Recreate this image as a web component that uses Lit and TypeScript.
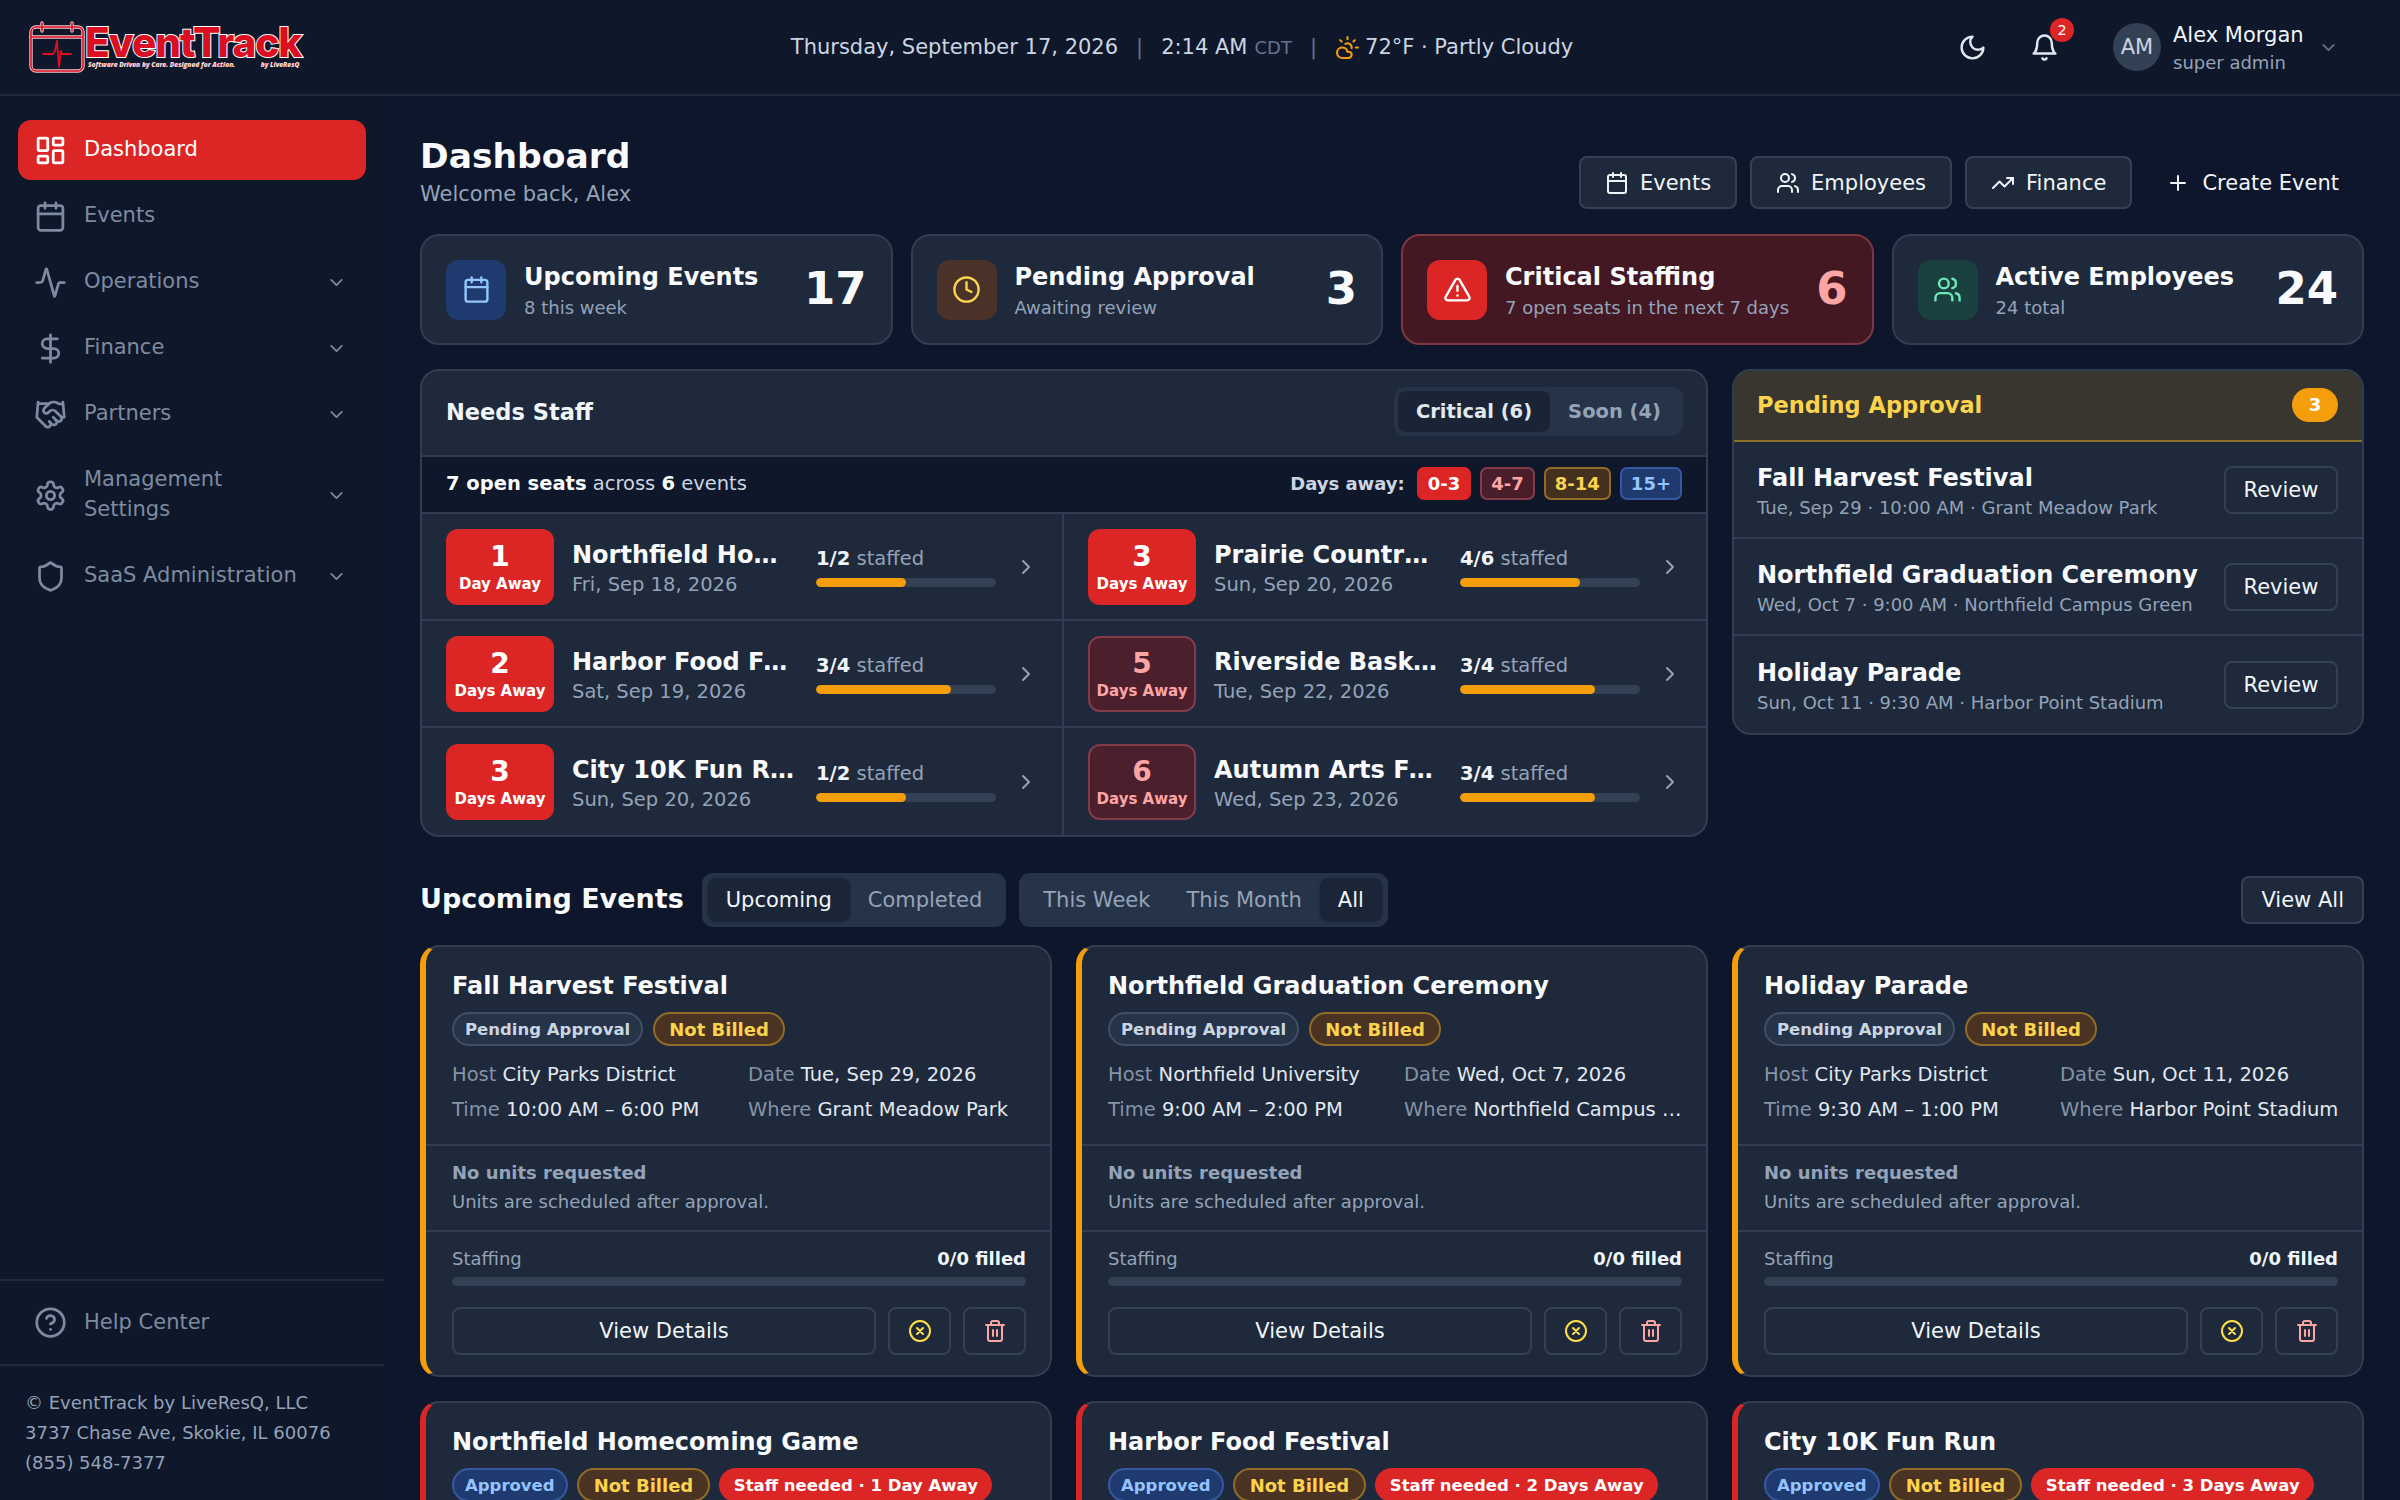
import { LitElement, html, css, svg } from "lit";
import { customElement } from "lit/decorators.js";

const I: Record<string, any> = {
  dash: svg`<rect x="3" y="3" width="7" height="9" rx="1"/><rect x="14" y="3" width="7" height="5" rx="1"/><rect x="14" y="12" width="7" height="9" rx="1"/><rect x="3" y="16" width="7" height="5" rx="1"/>`,
  cal: svg`<path d="M8 2v4M16 2v4"/><rect x="3" y="4" width="18" height="18" rx="2"/><path d="M3 10h18"/>`,
  activity: svg`<path d="M22 12h-2.48a2 2 0 0 0-1.93 1.46l-2.35 8.36a.25.25 0 0 1-.48 0L9.24 2.18a.25.25 0 0 0-.48 0l-2.35 8.36A2 2 0 0 1 4.49 12H2"/>`,
  dollar: svg`<path d="M12 2v20"/><path d="M17 5H9.5a3.5 3.5 0 0 0 0 7h5a3.5 3.5 0 0 1 0 7H6"/>`,
  hand: svg`<path d="m11 17 2 2a1 1 0 1 0 3-3"/><path d="m14 14 2.5 2.5a1 1 0 1 0 3-3l-3.88-3.88a3 3 0 0 0-4.24 0l-.88.88a1 1 0 1 1-3-3l2.81-2.81a5.79 5.79 0 0 1 7.06-.87l.47.28a2 2 0 0 0 1.42.25L21 4"/><path d="m21 3 1 11h-2"/><path d="M3 3 2 14l6.5 6.5a1 1 0 1 0 3-3"/><path d="M3 4h8"/>`,
  gear: svg`<path d="M12.22 2h-.44a2 2 0 0 0-2 2v.18a2 2 0 0 1-1 1.73l-.43.25a2 2 0 0 1-2 0l-.15-.08a2 2 0 0 0-2.73.73l-.22.38a2 2 0 0 0 .73 2.73l.15.1a2 2 0 0 1 1 1.72v.51a2 2 0 0 1-1 1.74l-.15.09a2 2 0 0 0-.73 2.73l.22.38a2 2 0 0 0 2.73.73l.15-.08a2 2 0 0 1 2 0l.43.25a2 2 0 0 1 1 1.73V20a2 2 0 0 0 2 2h.44a2 2 0 0 0 2-2v-.18a2 2 0 0 1 1-1.73l.43-.25a2 2 0 0 1 2 0l.15.08a2 2 0 0 0 2.73-.73l.22-.39a2 2 0 0 0-.73-2.73l-.15-.08a2 2 0 0 1-1-1.74v-.5a2 2 0 0 1 1-1.74l.15-.09a2 2 0 0 0 .73-2.73l-.22-.38a2 2 0 0 0-2.73-.73l-.15.08a2 2 0 0 1-2 0l-.43-.25a2 2 0 0 1-1-1.73V4a2 2 0 0 0-2-2z"/><circle cx="12" cy="12" r="3"/>`,
  shield: svg`<path d="M20 13c0 5-3.5 7.5-7.66 8.95a1 1 0 0 1-.67-.01C7.5 20.5 4 18 4 13V6a1 1 0 0 1 1-1c2 0 4.5-1.2 6.24-2.72a1.17 1.17 0 0 1 1.52 0C14.51 3.81 17 5 19 5a1 1 0 0 1 1 1z"/>`,
  down: svg`<path d="m6 9 6 6 6-6"/>`,
  right: svg`<path d="m9 18 6-6-6-6"/>`,
  moon: svg`<path d="M12 3a6 6 0 0 0 9 9 9 9 0 1 1-9-9Z"/>`,
  bell: svg`<path d="M6 8a6 6 0 0 1 12 0c0 7 3 9 3 9H3s3-2 3-9"/><path d="M10.3 21a1.94 1.94 0 0 0 3.4 0"/>`,
  clock: svg`<circle cx="12" cy="12" r="10"/><path d="M12 6v6l4 2"/>`,
  alert: svg`<path d="m21.73 18-8-14a2 2 0 0 0-3.48 0l-8 14A2 2 0 0 0 4 21h16a2 2 0 0 0 1.73-3"/><path d="M12 9v4"/><path d="M12 17h.01"/>`,
  users: svg`<path d="M16 21v-2a4 4 0 0 0-4-4H6a4 4 0 0 0-4 4v2"/><circle cx="9" cy="7" r="4"/><path d="M22 21v-2a4 4 0 0 0-3-3.87"/><path d="M16 3.13a4 4 0 0 1 0 7.75"/>`,
  trend: svg`<path d="M22 7l-8.5 8.5-5-5L2 17"/><path d="M16 7h6v6"/>`,
  plus: svg`<path d="M5 12h14M12 5v14"/>`,
  cx: svg`<circle cx="12" cy="12" r="10"/><path d="m15 9-6 6M9 9l6 6"/>`,
  trash: svg`<path d="M3 6h18"/><path d="M19 6v14c0 1-1 2-2 2H7c-1 0-2-1-2-2V6"/><path d="M8 6V4c0-1 1-2 2-2h4c1 0 2 1 2 2v2"/><path d="M10 11v6M14 11v6"/>`,
  help: svg`<circle cx="12" cy="12" r="10"/><path d="M9.09 9a3 3 0 0 1 5.83 1c0 2-3 3-3 3"/><path d="M12 17h.01"/>`,
  sun: svg`<path d="M12 2v2M4.93 4.93l1.41 1.41M20 12h2M19.07 4.93l-1.41 1.41"/><path d="M15.947 12.65a4 4 0 0 0-5.925-4.128"/><path d="M13 22H7a5 5 0 1 1 4.9-6H13a3 3 0 0 1 0 6Z"/>`,
};
const ic = (n: string, cls = "") => html`<svg class="ic ${cls}" viewBox="0 0 24 24" fill="none" stroke="currentColor" stroke-width="2" stroke-linecap="round" stroke-linejoin="round">${I[n]}</svg>`;

const nav = [
  ["dash", "Dashboard", false, true],
  ["cal", "Events", false, false],
  ["activity", "Operations", true, false],
  ["dollar", "Finance", true, false],
  ["hand", "Partners", true, false],
  ["gear", "Management Settings", true, false],
  ["shield", "SaaS Administration", true, false],
] as const;

const stats = [
  ["cal", "blue", "Upcoming Events", "8 this week", "17", false],
  ["clock", "amber", "Pending Approval", "Awaiting review", "3", false],
  ["alert", "red", "Critical Staffing", "7 open seats in the next 7 days", "6", true],
  ["users", "green", "Active Employees", "24 total", "24", false],
] as const;

const staff = [
  [1, "Day Away", "Northfield Homecoming Game", "Fri, Sep 18, 2026", 1, 2, true],
  [3, "Days Away", "Prairie Country Fair", "Sun, Sep 20, 2026", 4, 6, true],
  [2, "Days Away", "Harbor Food Festival", "Sat, Sep 19, 2026", 3, 4, true],
  [5, "Days Away", "Riverside Basketball Classic", "Tue, Sep 22, 2026", 3, 4, false],
  [3, "Days Away", "City 10K Fun Run", "Sun, Sep 20, 2026", 1, 2, true],
  [6, "Days Away", "Autumn Arts Festival", "Wed, Sep 23, 2026", 3, 4, false],
] as const;

const pending = [
  ["Fall Harvest Festival", "Tue, Sep 29 · 10:00 AM · Grant Meadow Park"],
  ["Northfield Graduation Ceremony", "Wed, Oct 7 · 9:00 AM · Northfield Campus Green"],
  ["Holiday Parade", "Sun, Oct 11 · 9:30 AM · Harbor Point Stadium"],
];

const events = [
  { t: "Fall Harvest Festival", host: "City Parks District", date: "Tue, Sep 29, 2026", time: "10:00 AM – 6:00 PM", where: "Grant Meadow Park" },
  { t: "Northfield Graduation Ceremony", host: "Northfield University", date: "Wed, Oct 7, 2026", time: "9:00 AM – 2:00 PM", where: "Northfield Campus Green" },
  { t: "Holiday Parade", host: "City Parks District", date: "Sun, Oct 11, 2026", time: "9:30 AM – 1:00 PM", where: "Harbor Point Stadium" },
];
const approved = [
  ["Northfield Homecoming Game", "Staff needed · 1 Day Away"],
  ["Harbor Food Festival", "Staff needed · 2 Days Away"],
  ["City 10K Fun Run", "Staff needed · 3 Days Away"],
];

@customElement("app-root")
export class AppRoot extends LitElement {
  static styles = css`
    :host { display: block; height: 100vh; overflow: hidden; background: #0d162a; color: #f1f5f9; font-family: "DejaVu Sans", sans-serif; font-size: 21px; }
    * { box-sizing: border-box; }
    .ic { display: block; flex: none; width: 1em; height: 1em; }
    header { display: grid; grid-template-columns: 384px 1fr 420px; align-items: center; height: 96px; background: #0f172a; border-bottom: 2px solid #1e293b; }
    .logo { display: flex; padding-left: 29px; align-items: flex-start; }
    .logo svg { width: 56px; height: 52px; flex: none; }
    .brand { display: flex; flex-direction: column; margin-top: 4px; }
    .brand b { font-family: Inter, sans-serif; font-weight: 800; font-size: 40.5px; line-height: 36px; letter-spacing: -1px; color: #dc0f22; -webkit-text-stroke: 2px #fff; paint-order: stroke fill; }
    .brand small { display: flex; justify-content: space-between; font-family: "Open Sans", sans-serif; font-style: italic; font-weight: 800; font-size: 6.6px; line-height: 8px; color: #fff; padding: 0 2px 0 3px; margin-top: 0; -webkit-text-stroke: .2px #dc0f22; }
    .mid { display: flex; justify-content: center; align-items: center; font-size: 21px; color: #cbd5e1; white-space: pre; }
    .mid i { font-style: normal; color: #64748b; margin: 0 18px; }
    .mid em { font-style: normal; font-size: 18px; color: #64748b; margin-left: 7px; }
    .mid .sun { color: #f59e0b; font-size: 25px; margin-right: 5px; }
    .right { display: flex; align-items: center; height: 100%; }
    .r-ic { position: relative; color: #e2e8f0; font-size: 29px; flex: none; }
    .moon { margin-left: -22px; }
    .bell { margin-left: 43px; }
    .badge { position: absolute; right: -15px; top: -15px; width: 24px; height: 24px; border-radius: 50%; background: #dc2626; color: #fff; font-size: 14.4px; line-height: 24px; text-align: center; }
    .avatar { width: 48px; height: 48px; border-radius: 50%; background: #334155; color: #cbd5e1; display: flex; align-items: center; justify-content: center; font-size: 21px; margin-left: 54px; flex: none; }
    .who { margin-left: 12px; padding-top: 1px; display: flex; flex-direction: column; }
    .who b { font-weight: 400; font-size: 21px; line-height: 30px; color: #f1f5f9; }
    .who span { font-size: 18px; line-height: 26px; color: #94a3b8; }
    .r-ch { color: #64748b; font-size: 21px; margin-left: 14px; }

    .body { display: flex; height: 1404px; }
    aside { width: 384px; flex: none; background: #0f172a; display: flex; flex-direction: column; color: #94a3b8; }
    .nav { flex: 1; display: flex; flex-direction: column; gap: 6px; padding: 24px 18px 0; }
    .ni { display: flex; align-items: center; min-height: 60px; padding: 0 19px 0 16px; border-radius: 13px; color: #7d8ba1; line-height: 30px; }
    .ni.on { background: #dc2626; color: #fff; }
    .ni .ic.main { font-size: 33px; margin-right: 17px; }
    .ni span { flex: 1; padding-bottom: 2px; }
    .ni .ch { font-size: 21px; }
    .ni.two { min-height: 90px; }
    .ni.two span { padding-right: 50px; }
    .help { border-top: 2px solid #1e293b; border-bottom: 2px solid #1e293b; height: 87px; padding: 0 34px; display: flex; align-items: center; gap: 17px; color: #7d8ba1; }
    .help .ic { font-size: 33px; }
    .help span { padding-bottom: 2px; }
    .foot { padding: 22px 25px 21px; font-size: 18px; line-height: 30px; color: #94a3b8; height: 134px; flex: none; }

    main { flex: 1; min-width: 0; padding: 40px 36px 0; display: flex; flex-direction: column; }
    .top { display: flex; justify-content: space-between; align-items: flex-end; height: 73px; margin-bottom: 25px; }
    h1 { margin: 0 0 3px; font-size: 34.5px; font-weight: 700; line-height: 40px; color: #f8fafc; }
    .welcome { font-size: 21px; line-height: 30px; color: #94a3b8; }
    .acts { display: flex; gap: 13px; }
    .btn { display: flex; align-items: center; gap: 11px; height: 53px; padding: 0 24px; background: #1e293b; border: 2px solid #334155; border-radius: 8px; color: #f1f5f9; font-size: 21px; }
    .btn .ic { font-size: 24px; }
    .btn.plain { background: none; border-color: transparent; padding: 0 23px 0 19px; gap: 12px; }
    .stats { display: grid; grid-template-columns: repeat(4, minmax(0, 1fr)); gap: 18px; }
    .stat { height: 111px; display: flex; align-items: center; background: #1e293b; border: 2px solid #303d52; border-radius: 19px; padding: 0 24px; }
    .stat.crit { background: #431823; border-color: #7f3742; }
    .si { width: 60px; height: 60px; flex: none; border-radius: 13px; display: flex; align-items: center; justify-content: center; font-size: 29px; }
    .si.blue { background: #1e3a6e; color: #93c5fd; }
    .si.amber { background: #4a3228; color: #fcd34d; }
    .si.red { background: #dc2626; color: #fff; }
    .si.green { background: #1a4040; color: #6ee7b7; }
    .st { flex: 1; margin-left: 18px; padding-top: 3px; min-width: 0; white-space: nowrap; }
    .st b { display: block; font-size: 24px; line-height: 33px; color: #f8fafc; }
    .st span { display: block; font-size: 18px; line-height: 27px; color: #94a3b8; }
    .sv { font-size: 45px; font-weight: 700; color: #f8fafc; line-height: 1; margin-top: -3px; }
    .crit .sv { color: #fca5a5; }

    .grid { display: grid; grid-template-columns: repeat(3, minmax(0, 1fr)); gap: 24px; }
    .needs-row { margin-top: 24px; align-items: start; }
    .needs { grid-column: span 2; background: #1e293b; border: 2px solid #303d52; border-radius: 19px; overflow: hidden; }
    .nh { height: 84px; display: flex; align-items: center; justify-content: space-between; padding: 0 23px 0 24px; }
    .nh b { font-size: 22.5px; margin-top: -2px; }
    .seg { display: flex; padding: 4px; background: #263449; border-radius: 11px; margin-top: -3px; }
    .seg div { padding: 0 18px; display: flex; align-items: center; font-size: 19.5px; font-weight: 700; color: #94a3b8; height: 41px; border-radius: 8px; white-space: nowrap; }
    .seg div.on { background: #1a2436; color: #e2e8f0; }
    .sub { height: 59px; background: #0f172a; border-top: 2px solid #303d52; border-bottom: 2px solid #303d52; display: flex; align-items: center; justify-content: space-between; padding: 0 24px 2px; font-size: 19.5px; color: #cbd5e1; }
    .sub b { color: #f8fafc; }
    .legend { display: flex; align-items: center; gap: 9px; }
    .legend b { font-size: 18px; color: #cbd5e1; margin-right: 3px; }
    .lg { height: 33px; padding: 0 9px; display: flex; align-items: center; border-radius: 7px; font-size: 18px; font-weight: 700; border: 2px solid transparent; }
    .lg.r { background: #dc2626; color: #fff; }
    .lg.m { background: #4a1d2a; border-color: #823b49; color: #fca5a5; }
    .lg.a { background: #43301f; border-color: #926b26; color: #fcd34d; }
    .lg.b { background: #1e3a6e; border-color: #3558a0; color: #93c5fd; }
    .rows { display: grid; grid-template-columns: repeat(2, minmax(0, 1fr)); }
    .row { height: 107px; display: flex; align-items: center; padding: 0 24px; border-bottom: 2px solid #303d52; min-width: 0; }
    .row:nth-child(odd) { border-right: 2px solid #303d52; }
    .row:nth-last-child(-n+2) { border-bottom: 0; }
    .db { width: 108px; height: 76px; flex: none; border-radius: 12px; border: 2px solid transparent; background: #dc2626; color: #fff; display: flex; flex-direction: column; align-items: center; justify-content: center; }
    .db.soft { background: #4c1f2d; border-color: #823b49; color: #fca5a5; }
    .db b { font-size: 28px; line-height: 34px; }
    .db span { font-size: 15px; font-weight: 700; line-height: 20px; white-space: nowrap; }
    .ri { flex: 1; min-width: 0; margin: 0 20px 0 18px; padding-top: 3px; }
    .ri b { display: block; font-size: 24px; line-height: 34px; white-space: nowrap; overflow: hidden; text-overflow: ellipsis; color: #f8fafc; }
    .ri span { display: block; font-size: 19.5px; line-height: 26px; color: #94a3b8; }
    .rs { width: 180px; flex: none; padding-top: 1px; font-size: 19.5px; color: #94a3b8; line-height: 24px; }
    .rs b { color: #f1f5f9; }
    .bar { height: 9px; border-radius: 5px; background: #334155; overflow: hidden; margin-top: 7px; }
    .bar div { height: 100%; background: #f59e0b; border-radius: 5px; }
    .row .go { font-size: 24px; color: #94a3b8; margin-left: 18px; }

    .pend { background: #1e293b; border: 2px solid #303d52; border-radius: 19px; overflow: hidden; }
    .ph { height: 71px; background: #39362f; border-bottom: 2px solid #8e6f2a; display: flex; align-items: center; justify-content: space-between; padding: 0 24px 2px 23px; }
    .ph b { font-size: 22.5px; color: #fcd34d; }
    .ph span { width: 46px; height: 34px; border-radius: 17px; background: #f59e0b; color: #fff; font-size: 18px; font-weight: 700; display: flex; align-items: center; justify-content: center; }
    .pr { height: 97px; display: flex; align-items: center; padding: 0 24px 0 23px; border-bottom: 2px solid #303d52; }
    .pr:last-child { border-bottom: 0; }
    .pt { flex: 1; min-width: 0; padding-top: 3px; white-space: nowrap; }
    .pt b { display: block; font-size: 24px; line-height: 34px; color: #f8fafc; }
    .pt span { display: block; font-size: 18px; line-height: 26px; color: #94a3b8; }
    .rev { width: 114px; height: 48px; flex: none; display: flex; align-items: center; justify-content: center; border: 2px solid #334155; border-radius: 8px; color: #f1f5f9; font-size: 21px; }

    .sec { display: flex; align-items: center; height: 54px; margin-top: 36px; margin-bottom: 18px; }
    .sec h2 { margin: -3px 18px 0 0; font-size: 27px; color: #f8fafc; font-weight: 700; }
    .tg { display: flex; padding: 5px 6px; background: #263449; border-radius: 11px; margin-right: 13px; height: 54px; }
    .tg div { padding: 0 18px; display: flex; align-items: center; font-size: 21px; color: #94a3b8; height: 43px; border-radius: 8px; white-space: nowrap; }
    .tg div.on { background: #1b2538; color: #f1f5f9; box-shadow: 0 1px 3px rgba(0,0,0,.3); }
    .va { margin-left: auto; height: 48px; padding: 0 18px; display: flex; align-items: center; border: 2px solid #334155; background: #1e293b; border-radius: 8px; font-size: 21px; color: #f1f5f9; }

    .cards { row-gap: 24px; }
    .card { background: #1e293b; border: 2px solid #303d52; border-left: 6px solid #f59e0b; border-radius: 19px; height: 432px; display: flex; flex-direction: column; min-width: 0; }
    .card.red { border-left-color: #dc2626; }
    .ct { padding: 21.5px 24px 0 26px; }
    .ct h3 { margin: 0; font-size: 24px; font-weight: 700; line-height: 34px; color: #f8fafc; white-space: nowrap; }
    .pills { display: flex; gap: 9.5px; margin-top: 9.5px; }
    .pill { height: 34px; padding: 0 11px; border-radius: 17px; border: 2px solid transparent; display: flex; align-items: center; font-weight: 700; white-space: nowrap; font-size: 16.5px; }
    .pill.p { background: #263449; border-color: #3f4e64; color: #cbd5e1; }
    .pill.n { background: #4a3323; border-color: #926b26; color: #fcd34d; font-size: 18px; padding: 0 14.5px; }
    .pill.ap { background: #1e3a6e; border-color: #3558a0; color: #93c5fd; }
    .pill.s { background: #dc2626; color: #fff; padding: 0 12.5px; }
    .det { display: grid; grid-template-columns: 278px minmax(0, 1fr); column-gap: 18px; row-gap: 5px; margin: 14px -3px 0 0; font-size: 19.5px; line-height: 30px; }
    .det div { white-space: nowrap; overflow: hidden; text-overflow: ellipsis; color: #e2e8f0; }
    .det span { color: #8593a8; }
    .units { margin-top: 19px; border-top: 2px solid #303d52; border-bottom: 2px solid #303d52; height: 88px; padding: 0 24px 0 26px; display: flex; flex-direction: column; justify-content: center; font-size: 18px; line-height: 29px; color: #94a3b8; }
    .units b { color: #94a3b8; margin-top: -2px; }
    .sf { padding: 12.5px 24px 0 26px; }
    .sfl { display: flex; justify-content: space-between; font-size: 18px; line-height: 28px; color: #94a3b8; }
    .sfl b { color: #f1f5f9; }
    .sf .bar { margin-top: 4px; }
    .cb { display: flex; gap: 12px; padding: 21px 24px 0 26px; }
    .cb .vd { flex: 1; height: 48px; display: flex; align-items: center; justify-content: center; border: 2px solid #334155; border-radius: 8px; font-size: 21px; color: #f1f5f9; }
    .cb .ib { width: 63px; height: 48px; flex: none; display: flex; align-items: center; justify-content: center; border: 2px solid #334155; border-radius: 8px; font-size: 24px; }
    .ib.y { color: #fde047; }
    .ib.t { color: #fca5a5; }
  `;

  private detail(l: string, v: string) {
    return html`<div><span>${l}</span> ${v}</div>`;
  }

  render() {
    return html`
      <header>
        <div class="logo">
          <svg viewBox="0 0 56 52" fill="none" stroke-linecap="round" stroke-linejoin="round">
            <g stroke="#f3c9cf" stroke-width="3.4">
              <rect x="2" y="6" width="52" height="44" rx="5"/><path d="M2 16h52M13 2v8M43 2v8"/>
            </g>
            <g stroke="#dc0f22" stroke-width="1.6">
              <rect x="2" y="6" width="52" height="44" rx="5"/><path d="M2 16h52M13 2v8M43 2v8"/>
            </g>
            <path d="M14 33h10l2-3 2-10 2 26 2-16 1 3h9" stroke="#dc0f22" stroke-width="1.8"/>
          </svg>
          <div class="brand"><b>EventTrack</b><small><span>Software Driven by Care. Designed for Action.</span><span>by LiveResQ</span></small></div>
        </div>
        <div class="mid">Thursday, September 17, 2026<i>|</i>2:14 AM<em>CDT</em><i>|</i>${ic("sun", "sun")}72°F · Partly Cloudy</div>
        <div class="right">
          <div class="r-ic moon">${ic("moon")}</div>
          <div class="r-ic bell">${ic("bell")}<div class="badge">2</div></div>
          <div class="avatar">AM</div>
          <div class="who"><b>Alex Morgan</b><span>super admin</span></div>
          <div class="r-ch">${ic("down")}</div>
        </div>
      </header>
      <div class="body">
        <aside>
          <div class="nav">
            ${nav.map(([i, t, c, on]) => html`
              <div class="ni ${on ? "on" : ""} ${t.startsWith("Management") ? "two" : ""}">
                ${ic(i, "main")}<span>${t}</span>${c ? ic("down", "ch") : ""}
              </div>`)}
          </div>
          <div class="help">${ic("help")}<span>Help Center</span></div>
          <div class="foot">© EventTrack by LiveResQ, LLC<br />3737 Chase Ave, Skokie, IL 60076<br />(855) 548-7377</div>
        </aside>
        <main>
          <div class="top">
            <div><h1>Dashboard</h1><div class="welcome">Welcome back, Alex</div></div>
            <div class="acts">
              <div class="btn">${ic("cal")}Events</div>
              <div class="btn">${ic("users")}Employees</div>
              <div class="btn">${ic("trend")}Finance</div>
              <div class="btn plain">${ic("plus")}Create Event</div>
            </div>
          </div>
          <div class="stats">
            ${stats.map(([i, c, t, s, v, crit]) => html`
              <div class="stat ${crit ? "crit" : ""}">
                <div class="si ${c}">${ic(i)}</div>
                <div class="st"><b>${t}</b><span>${s}</span></div>
                <div class="sv">${v}</div>
              </div>`)}
          </div>
          <div class="grid needs-row">
            <section class="needs">
              <div class="nh"><b>Needs Staff</b><div class="seg"><div class="on">Critical (6)</div><div>Soon (4)</div></div></div>
              <div class="sub">
                <div><b>7 open seats</b> across <b>6</b> events</div>
                <div class="legend"><b>Days away:</b><div class="lg r">0-3</div><div class="lg m">4-7</div><div class="lg a">8-14</div><div class="lg b">15+</div></div>
              </div>
              <div class="rows">
                ${staff.map(([n, d, t, dt, a, b, hard]) => html`
                  <div class="row">
                    <div class="db ${hard ? "" : "soft"}"><b>${n}</b><span>${d}</span></div>
                    <div class="ri"><b>${t}</b><span>${dt}</span></div>
                    <div class="rs"><b>${a}/${b}</b> staffed<div class="bar"><div style="width:${(a / b) * 100}%"></div></div></div>
                    ${ic("right", "go")}
                  </div>`)}
              </div>
            </section>
            <section class="pend">
              <div class="ph"><b>Pending Approval</b><span>3</span></div>
              ${pending.map(([t, s]) => html`<div class="pr"><div class="pt"><b>${t}</b><span>${s}</span></div><div class="rev">Review</div></div>`)}
            </section>
          </div>
          <div class="sec">
            <h2>Upcoming Events</h2>
            <div class="tg"><div class="on">Upcoming</div><div>Completed</div></div>
            <div class="tg"><div>This Week</div><div>This Month</div><div class="on">All</div></div>
            <div class="va">View All</div>
          </div>
          <div class="grid cards">
            ${events.map((e) => html`
              <article class="card">
                <div class="ct">
                  <h3>${e.t}</h3>
                  <div class="pills"><div class="pill p">Pending Approval</div><div class="pill n">Not Billed</div></div>
                  <div class="det">${this.detail("Host", e.host)}${this.detail("Date", e.date)}${this.detail("Time", e.time)}${this.detail("Where", e.where)}</div>
                </div>
                <div class="units"><b>No units requested</b>Units are scheduled after approval.</div>
                <div class="sf"><div class="sfl">Staffing<b>0/0 filled</b></div><div class="bar"></div></div>
                <div class="cb"><div class="vd">View Details</div><div class="ib y">${ic("cx")}</div><div class="ib t">${ic("trash")}</div></div>
              </article>`)}
            ${approved.map(([t, s]) => html`
              <article class="card red">
                <div class="ct">
                  <h3>${t}</h3>
                  <div class="pills"><div class="pill ap">Approved</div><div class="pill n">Not Billed</div><div class="pill s">${s}</div></div>
                </div>
              </article>`)}
          </div>
        </main>
      </div>
    `;
  }
}
